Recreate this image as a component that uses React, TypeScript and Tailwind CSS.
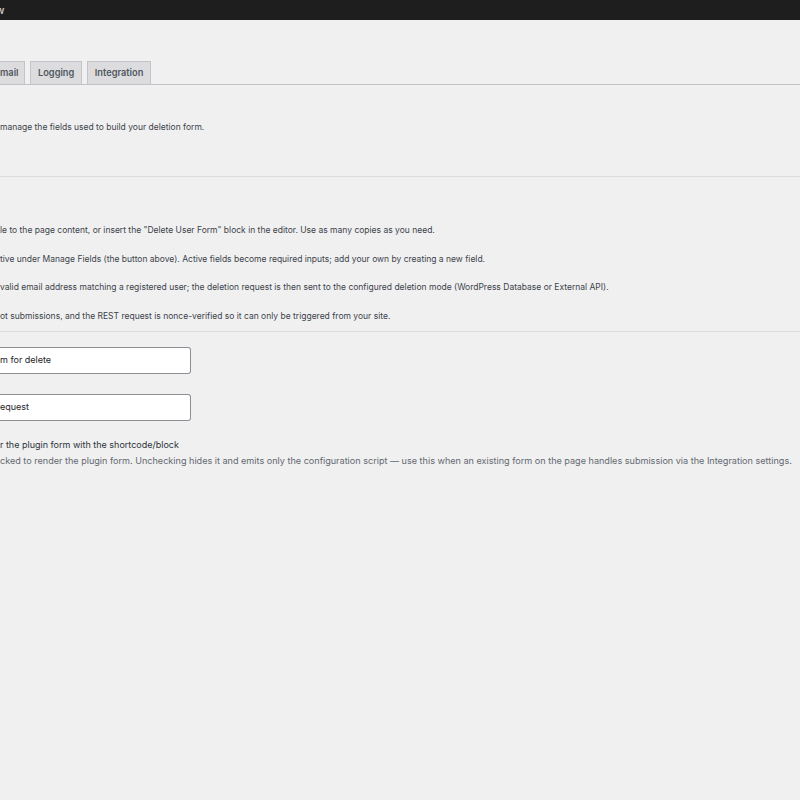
import React from 'react';

const font = { fontFamily: 'Inter, "Noto Sans", sans-serif' };

const steps = [
  'le to the page content, or insert the "Delete User Form" block in the editor. Use as many copies as you need.',
  'tive under Manage Fields (the button above). Active fields become required inputs; add your own by creating a new field.',
  'valid email address matching a registered user; the deletion request is then sent to the configured deletion mode (WordPress Database or External API).',
  'ot submissions, and the REST request is nonce-verified so it can only be triggered from your site.',
];

const App: React.FC = () => {
  return (
    <div className="min-h-[800px] w-[800px] overflow-hidden bg-[#f0f0f1] text-[#3c434a]" style={font}>
      <div className="h-[20px] bg-[#1e1e1e] flex items-center">
        <span className="text-[10px] font-semibold text-[#c3c4c7] -ml-[4px] leading-none">w</span>
      </div>

      <div className="mt-[41px] flex items-end gap-[5px] border-b border-[#c3c4c7] h-[24px]">
        <div className="h-[23px] flex items-center pr-[6px] bg-[#dcdcde] border border-b-0 border-l-0 border-[#c3c4c7] text-[9.25px] font-semibold text-[#50575e]">
          mail
        </div>
        <div className="h-[23px] flex items-center px-[6.5px] bg-[#dcdcde] border border-b-0 border-[#c3c4c7] text-[9.25px] font-semibold text-[#50575e]">
          Logging
        </div>
        <div className="h-[23px] flex items-center px-[7px] bg-[#dcdcde] border border-b-0 border-[#c3c4c7] text-[9.25px] font-semibold text-[#50575e]">
          Integration
        </div>
      </div>

      <p className="mt-[36px] text-[8.5px] leading-[12px]">manage the fields used to build your deletion form.</p>

      <div className="mt-[43px] border-t border-[#dcdcde]" />

      <div className="mt-[47px] flex flex-col gap-[16.5px]">
        {steps.map((s) => (
          <p key={s} className="text-[8.5px] leading-[12px]">{s}</p>
        ))}
      </div>

      <div className="mt-[9px] border-t border-[#dcdcde]" />

      <div className="mt-[15px] flex flex-col gap-[20px]">
        <div className="w-[191px] h-[27px] bg-white border border-[#8c8f94] rounded-[3px] rounded-l-none border-l-0 flex items-center text-[9px] text-[#1d2327]">
          m for delete
        </div>
        <div className="w-[191px] h-[27px] bg-white border border-[#8c8f94] rounded-[3px] rounded-l-none border-l-0 flex items-center text-[9px] text-[#1d2327]">
          equest
        </div>
      </div>

      <label className="mt-[18px] block text-[9px] font-normal leading-[12px] text-[#2c3338]">
        r the plugin form with the shortcode/block
      </label>
      <p className="mt-[4px] text-[9.08px] leading-[12px] text-[#646970]">
        cked to render the plugin form. Unchecking hides it and emits only the configuration script — use this when an existing form on the page handles submission via the Integration settings.
      </p>
    </div>
  );
};

export default App;
